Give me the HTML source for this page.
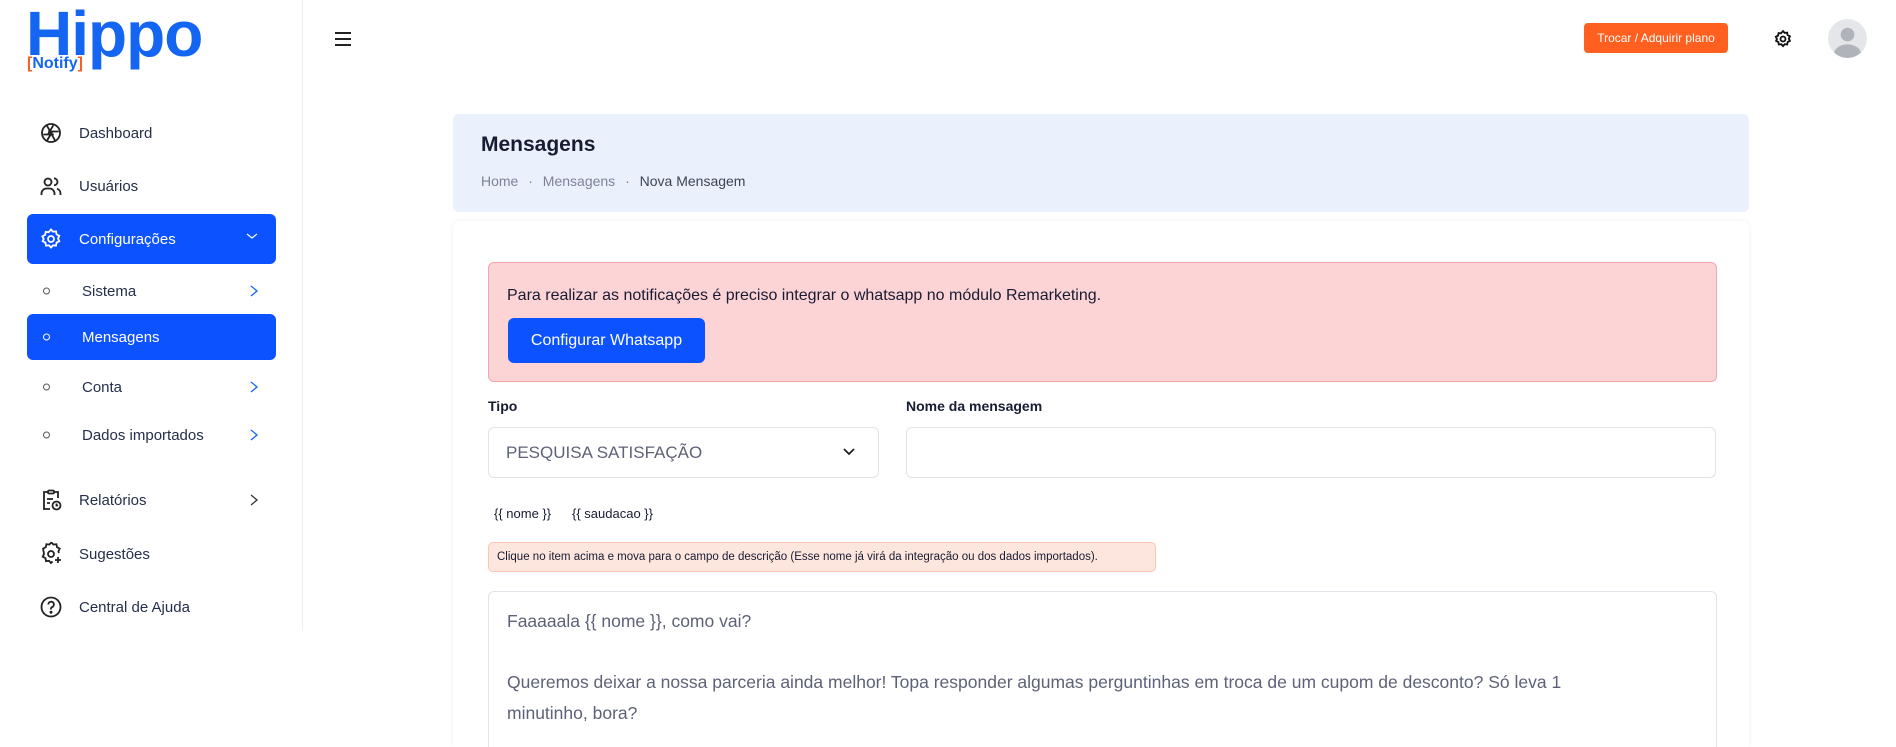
<!DOCTYPE html>
<html><head><meta charset="utf-8"><style>
*{box-sizing:border-box;margin:0;padding:0}
html,body{width:1896px;height:747px;overflow:hidden}
body{background:#fff;font-family:"Liberation Sans",sans-serif;color:#181c32;position:relative}
.abs{position:absolute}
.sb{position:absolute;left:0;top:0;width:303px;height:631px;border-right:1px solid #eef0f4;background:#fff}
.nav{position:absolute;left:27px;width:249px;height:46px;display:flex;align-items:center;font-size:15px;color:#252f4a}
.nav .ic{position:absolute;left:12px;top:50%;transform:translateY(-50%);width:24px;height:24px}
.nav .t{position:absolute;left:52px}
.nav .ch{position:absolute;left:222px;top:50%;transform:translateY(-50%)}
.act{background:#0d52ff;border-radius:6px;color:#fff}
.sub .dot{position:absolute;left:16px;width:7px;height:7px;border:1px solid #555;border-radius:50%;top:50%;transform:translateY(-50%)}
.sub .t{left:55px}
.act.sub .dot{border-color:#fff}
</style></head><body>
<div class="sb">
 <div class="abs" style="left:26px;top:-2px;font-size:64px;font-weight:bold;color:#1565f3;letter-spacing:-1px;line-height:72px">Hippo</div>
 <div class="abs" style="left:27px;top:55px;font-size:16px;font-weight:bold;color:#1565f3;background:#fff;padding-right:2px"><span style="color:#f2622b">[</span>Notify<span style="color:#f2622b">]</span></div>

 <div class="nav" style="top:110px"><svg class="ic" viewBox="0 0 24 24" fill="none" stroke="#222" stroke-width="1.8"><circle cx="12" cy="12" r="9"/><path d="M14.3 4.3L9 13.5M19.7 10.5H9.2M16 19.3L10.7 10.2M8 19.7L13.3 10.5M4.3 13.5h10.5M7.9 4.7L13.2 13.8"/></svg><span class="t">Dashboard</span></div>
 <div class="nav" style="top:163px"><svg class="ic" viewBox="0 0 24 24" fill="none" stroke="#222" stroke-width="1.8"><circle cx="9" cy="8" r="3.5"/><path d="M2.5 21v-1.5a5 5 0 0 1 5-5h3a5 5 0 0 1 5 5V21M15 4.3a3.5 3.5 0 0 1 0 7M18 14.7a5 5 0 0 1 3.5 4.8V21"/></svg><span class="t">Usuários</span></div>
 <div class="nav act" style="top:214px;height:50px"><svg class="ic" viewBox="0 0 24 24" fill="none" stroke="#fff" stroke-width="1.8"><circle cx="12" cy="12" r="3"/><path d="M12 2.5l2 2.2 3-.3.6 3 2.7 1.4-1.3 2.7 1.3 2.7-2.7 1.4-.6 3-3-.3-2 2.2-2-2.2-3 .3-.6-3-2.7-1.4L4.7 12 3.4 9.3l2.7-1.4.6-3 3 .3z"/></svg><span class="t" style="font-size:15px">Configurações</span><svg class="ch" style="left:218px;top:44%" width="14" height="10" viewBox="0 0 14 10" fill="none" stroke="#fff" stroke-width="1.2"><path d="M2 3l5 4 5-4"/></svg></div>
 <div class="nav sub" style="top:268px"><span class="dot"></span><span class="t">Sistema</span><svg class="ch" width="10" height="14" viewBox="0 0 10 14" fill="none" stroke="#1565f3" stroke-width="1.3"><path d="M2 2l6 5-6 5"/></svg></div>
 <div class="nav sub act" style="top:314px"><span class="dot"></span><span class="t">Mensagens</span></div>
 <div class="nav sub" style="top:364px"><span class="dot"></span><span class="t">Conta</span><svg class="ch" width="10" height="14" viewBox="0 0 10 14" fill="none" stroke="#1565f3" stroke-width="1.3"><path d="M2 2l6 5-6 5"/></svg></div>
 <div class="nav sub" style="top:412px"><span class="dot"></span><span class="t">Dados importados</span><svg class="ch" width="10" height="14" viewBox="0 0 10 14" fill="none" stroke="#1565f3" stroke-width="1.3"><path d="M2 2l6 5-6 5"/></svg></div>
 <div class="nav" style="top:477px"><svg class="ic" viewBox="0 0 24 24" fill="none" stroke="#222" stroke-width="1.8"><path d="M9 4H5v17h6M15 4h4v6"/><rect x="9" y="2.5" width="6" height="3" rx="1"/><path d="M8 11h6M8 15h3"/><circle cx="17.5" cy="17.5" r="4"/><path d="M17.5 15.5v2h1.5"/></svg><span class="t">Relatórios</span><svg class="ch" width="10" height="14" viewBox="0 0 10 14" fill="none" stroke="#333" stroke-width="1.3"><path d="M2 2l6 5-6 5"/></svg></div>
 <div class="nav" style="top:531px"><svg class="ic" viewBox="0 0 24 24" fill="none" stroke="#222" stroke-width="1.8"><circle cx="12" cy="12" r="3"/><path d="M20 11l-.6-1.7 1.3-2.7-2.7-1.4-.6-3-3 .3-2-2.2-2 2.2-3-.3-.6 3-2.7 1.4L5 12l-1.3 2.7 2.7 1.4.6 3 3-.3 2 2.2 1.5-1.6M19 15v6M16 18h6"/></svg><span class="t">Sugestões</span></div>
 <div class="nav" style="top:584px"><svg class="ic" viewBox="0 0 24 24" fill="none" stroke="#222" stroke-width="1.8"><circle cx="12" cy="12" r="9.5"/><path d="M9.3 9.5a2.8 2.8 0 1 1 3.8 2.6c-.7.3-1.1.9-1.1 1.7v.7"/><circle cx="12" cy="17.3" r=".6" fill="#222"/></svg><span class="t">Central de Ajuda</span></div>
</div>

<svg class="abs" style="left:334px;top:31px" width="18" height="16" viewBox="0 0 18 16" stroke="#222" stroke-width="2"><path d="M1 2h16M1 8h16M1 14h16"/></svg>
<div class="abs" style="left:1584px;top:23px;width:144px;height:30px;background:#ff5f1f;border-radius:4px;color:#fff;font-size:12px;line-height:30px;text-align:center">Trocar / Adquirir plano</div>
<svg class="abs" style="left:1773px;top:29px" width="20" height="20" viewBox="0 0 24 24" fill="none" stroke="#111" stroke-width="2.2"><circle cx="12" cy="12" r="3"/><path d="M12 2.5l2 2.2 3-.3.6 3 2.7 1.4-1.3 2.7 1.3 2.7-2.7 1.4-.6 3-3-.3-2 2.2-2-2.2-3 .3-.6-3-2.7-1.4L4.7 12 3.4 9.3l2.7-1.4.6-3 3 .3z"/></svg>
<svg class="abs" style="left:1828px;top:19px" width="39" height="39" viewBox="0 0 40 40"><defs><clipPath id="c"><circle cx="20" cy="20" r="20"/></clipPath></defs><circle cx="20" cy="20" r="20" fill="#e4e6ea"/><g clip-path="url(#c)" fill="#b0b4ba"><circle cx="20" cy="16" r="7"/><ellipse cx="20" cy="36" rx="14" ry="10"/></g></svg>

<div class="abs" style="left:453px;top:114px;width:1296px;height:98px;background:#eaf1fd;border-radius:6px"></div>
<div class="abs" style="left:481px;top:133px;font-size:21px;font-weight:bold;color:#181c32">Mensagens</div>
<div class="abs" style="left:481px;top:173px;font-size:14px;color:#7e8299">Home <span style="margin:0 6px">·</span> Mensagens <span style="margin:0 6px">·</span> <span style="color:#3f4254">Nova Mensagem</span></div>

<div class="abs" style="left:453px;top:221px;width:1296px;height:526px;background:#fff;border-radius:6px 6px 0 0;box-shadow:0 0 6px rgba(0,0,0,.06)"></div>
<div class="abs" style="left:488px;top:262px;width:1229px;height:120px;background:#fdd4d6;border:1px solid #f3a5a9;border-radius:6px"></div>
<div class="abs" style="left:507px;top:287px;font-size:16px;color:#181c32">Para realizar as notificações é preciso integrar o whatsapp no módulo Remarketing.</div>
<div class="abs" style="left:508px;top:318px;width:197px;height:45px;background:#0d52ff;border-radius:6px;color:#fff;font-size:16px;line-height:45px;text-align:center">Configurar Whatsapp</div>

<div class="abs" style="left:488px;top:398px;font-size:14px;font-weight:bold;color:#181c32">Tipo</div>
<div class="abs" style="left:906px;top:398px;font-size:14px;font-weight:bold;color:#181c32">Nome da mensagem</div>
<div class="abs" style="left:488px;top:427px;width:391px;height:51px;border:1px solid #e1e3ea;border-radius:6px"></div>
<div class="abs" style="left:506px;top:443px;font-size:17px;color:#5e6278">PESQUISA SATISFAÇÃO</div>
<svg class="abs" style="left:842px;top:447px" width="14" height="10" viewBox="0 0 14 10" fill="none" stroke="#222" stroke-width="1.8"><path d="M2 2l5 5 5-5"/></svg>
<div class="abs" style="left:906px;top:427px;width:810px;height:51px;border:1px solid #e1e3ea;border-radius:6px"></div>

<div class="abs" style="left:494px;top:506px;font-size:13px;color:#181c32;white-space:nowrap">{{ nome }}</div>
<div class="abs" style="left:572px;top:506px;font-size:13px;color:#181c32;white-space:nowrap">{{ saudacao }}</div>
<div class="abs" style="left:488px;top:542px;width:668px;height:30px;background:#fde6dd;border:1px solid #f9c6b1;border-radius:5px;font-size:11.5px;line-height:28px;padding-left:8px;color:#181c32;white-space:nowrap;overflow:hidden">Clique no item acima e mova para o campo de descrição (Esse nome já virá da integração ou dos dados importados).</div>

<div class="abs" style="left:488px;top:591px;width:1229px;height:156px;border:1px solid #e1e3ea;border-bottom:none;border-radius:6px 6px 0 0"></div>
<div class="abs" style="left:507px;top:606px;font-size:17.5px;color:#5e6278;line-height:30.5px;width:1190px">Faaaaala {{ nome }}, como vai?<br><br>Queremos deixar a nossa parceria ainda melhor! Topa responder algumas perguntinhas em troca de um cupom de desconto? Só leva 1<br>minutinho, bora?</div>
</body></html>
